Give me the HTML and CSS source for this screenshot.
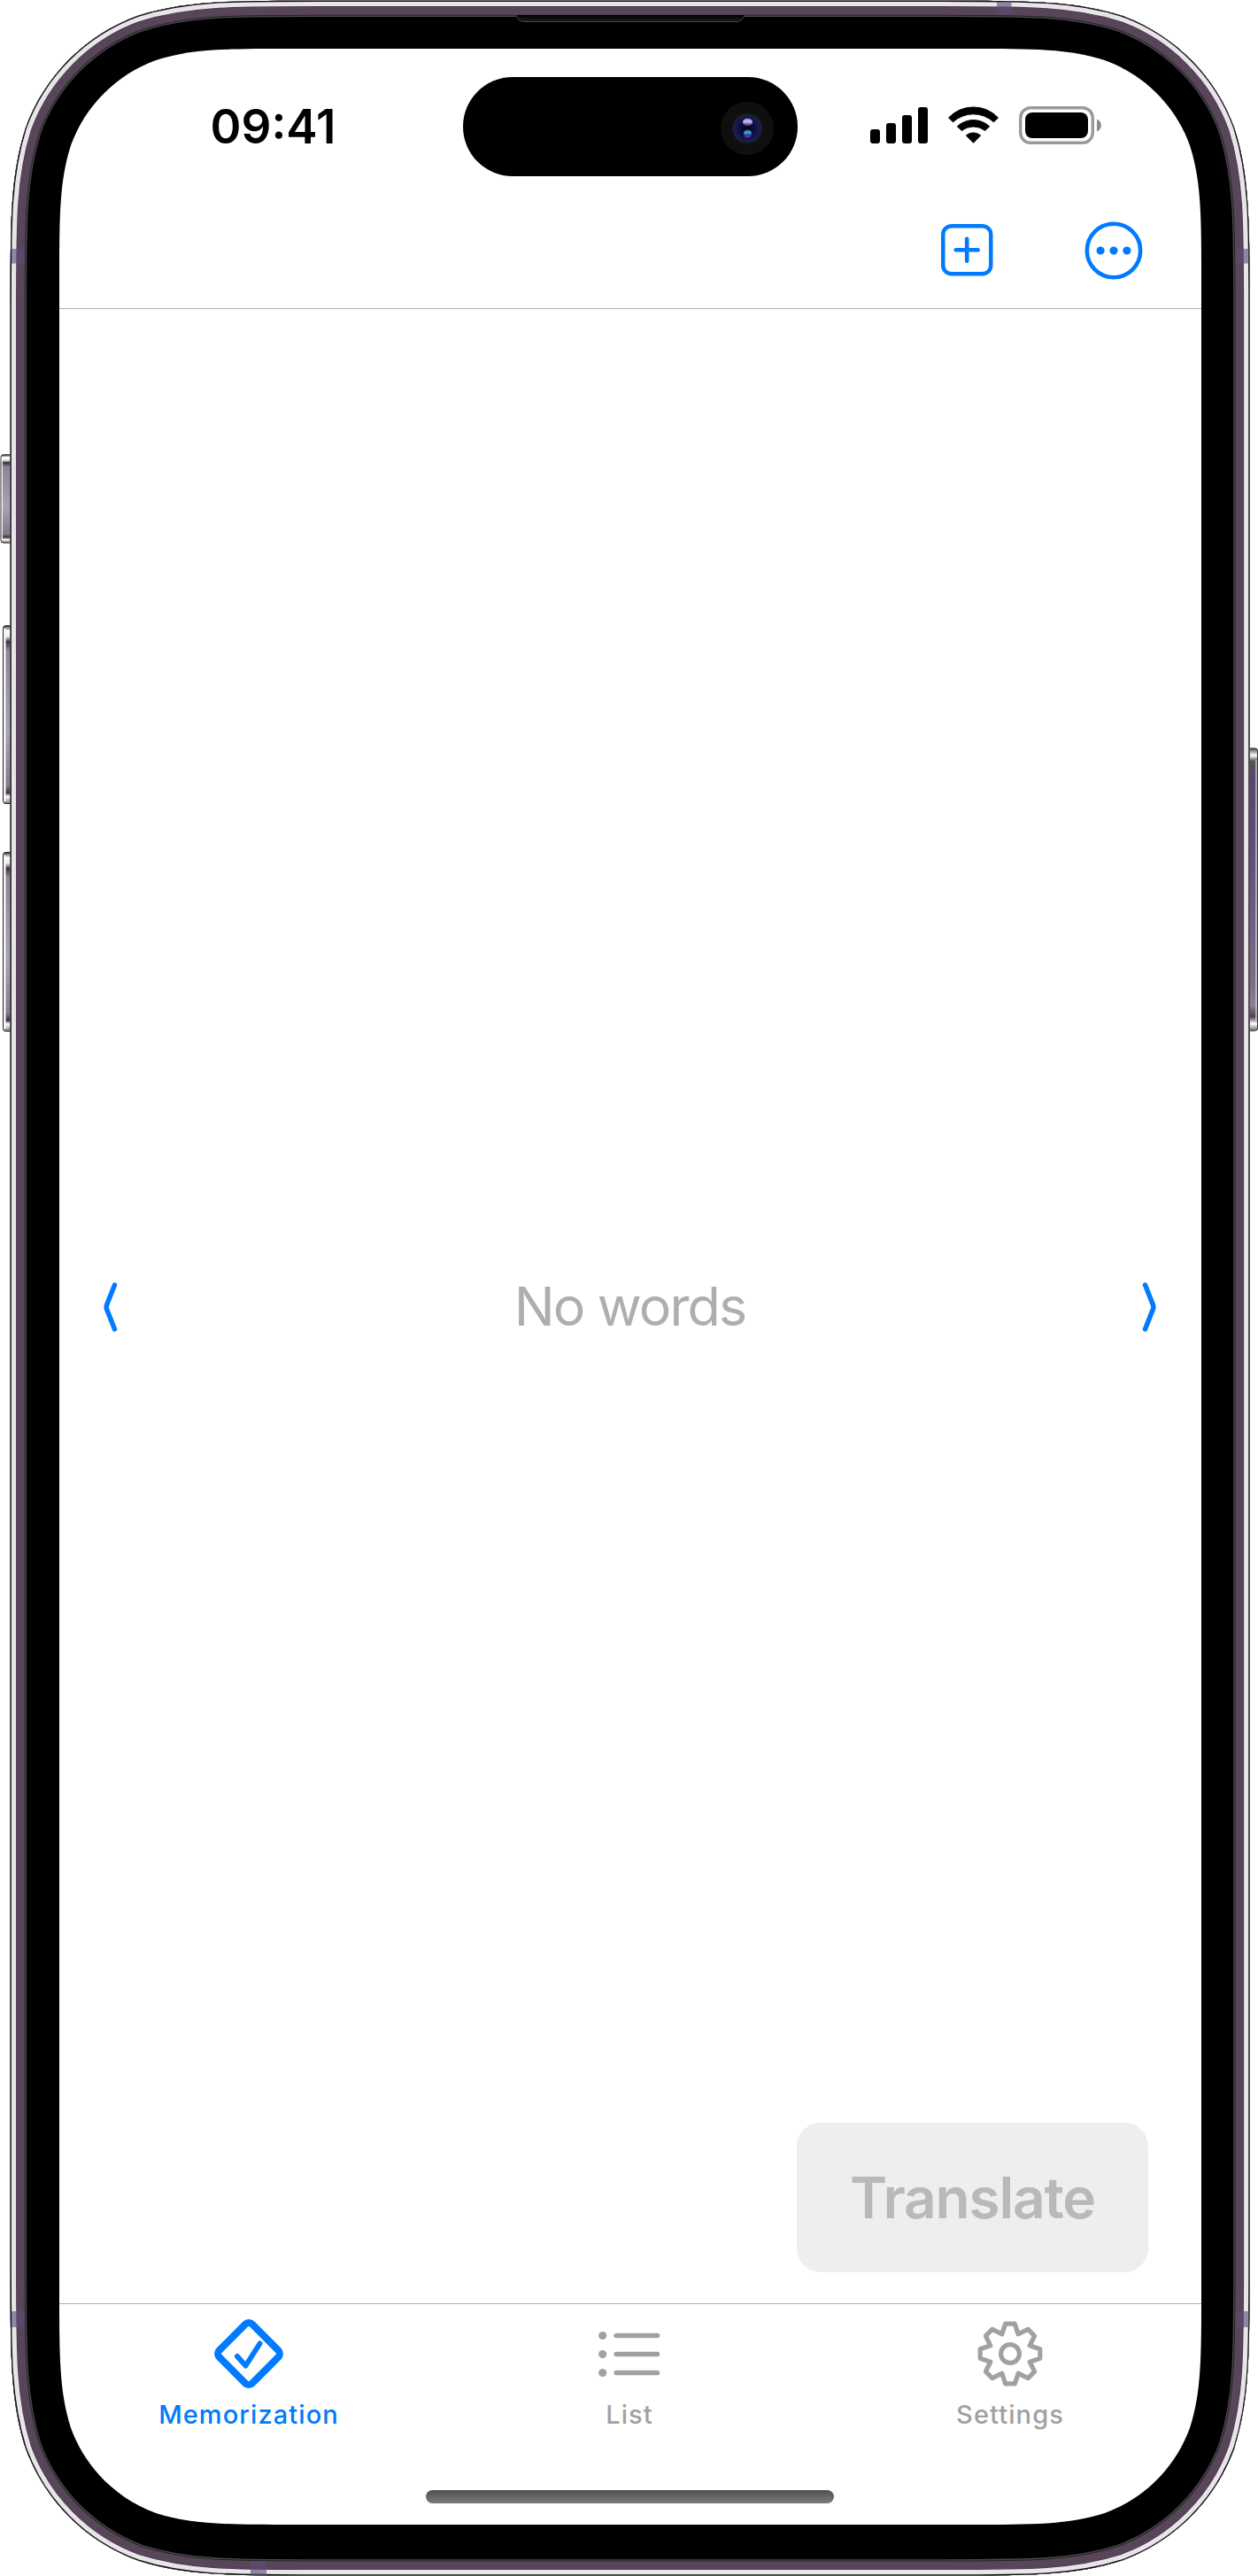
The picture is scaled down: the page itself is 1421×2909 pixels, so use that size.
FILE: index.html
```html
<!DOCTYPE html>
<html lang="en">
<head>
<meta charset="utf-8">
<title>Memorization</title>
<link rel="stylesheet" href="styles.css">
</head>
<body>
<div class="phone">
  <svg class="frame" viewBox="0 0 1421 2909" aria-hidden="true">
    <defs>
      <path id="body" d="M11.7,349.2c0,-100.3 0,-150.5 17.1,-204.5c21.4,-59 67.9,-105.5 126.9,-126.9c54,-17.1 104.2,-17.1 204.5,-17.1H1063c100.3,0 150.5,0 204.5,17.1c59,21.4 105.5,67.9 126.9,126.9c17.1,54 17.1,104.2 17.1,204.5V2560c0,100.3 0,150.5 -17.1,204.5c-21.4,59 -67.9,105.5 -126.9,126.9c-54,17.1 -104.2,17.1 -204.5,17.1H360.2c-100.3,0 -150.5,0 -204.5,-17.1c-59,-21.4 -105.5,-67.9 -126.9,-126.9c-17.1,-54 -17.1,-104.2 -17.1,-204.5z"/>
      <clipPath id="bodyClip"><use href="#body"/></clipPath>
      <linearGradient id="key" x1="0" y1="0" x2="0" y2="1">
        <stop offset="0" stop-color="#333"/><stop offset=".03" stop-color="#fff"/><stop offset=".06" stop-color="#eee"/>
        <stop offset=".09" stop-color="#3a333d"/><stop offset=".14" stop-color="#8d8496"/><stop offset=".6" stop-color="#a8a0b6"/>
        <stop offset=".9" stop-color="#85788a"/><stop offset=".94" stop-color="#3a333d"/><stop offset=".96" stop-color="#fff"/><stop offset="1" stop-color="#777"/>
      </linearGradient>
      <linearGradient id="power" x1="0" y1="0" x2="0" y2="1">
        <stop offset="0" stop-color="#444"/><stop offset=".025" stop-color="#fff"/><stop offset=".045" stop-color="#555"/>
        <stop offset=".1" stop-color="#58456b"/><stop offset=".4" stop-color="#62507a"/><stop offset=".85" stop-color="#7c7088"/>
        <stop offset=".91" stop-color="#927f98"/><stop offset=".95" stop-color="#4a3f4c"/><stop offset=".975" stop-color="#fff"/><stop offset="1" stop-color="#666"/>
      </linearGradient>
      <linearGradient id="speaker" x1="0" y1="0" x2="0" y2="1">
        <stop offset="0" stop-color="#000"/><stop offset="1" stop-color="#1c1e1d"/>
      </linearGradient>
    </defs>
    <rect x="1" y="513.500" width="16" height="99.500" rx="3" fill="url(#key)" stroke="#222"/>
    <path d="M2.300,516.500V610" stroke="#eee" stroke-width="1.500"/>
    <rect x="3.500" y="706.500" width="14" height="201" rx="3" fill="url(#key)" stroke="#222"/>
    <path d="M5.300,710V905" stroke="#f6f6f6" stroke-width="2.500"/>
    <rect x="3.500" y="962.500" width="14" height="202" rx="3" fill="url(#key)" stroke="#222"/>
    <path d="M5.300,966V1162" stroke="#f6f6f6" stroke-width="2.500"/>
    <rect x="1405" y="845" width="15.500" height="319" rx="3" fill="url(#power)" stroke="#333"/>
    <path d="M1419,858V1152" stroke="#ddd" stroke-width="1.300"/>
    <g clip-path="url(#bodyClip)">
      <use href="#body" fill="#000"/>
      <g fill="none">
        <use href="#body" stroke="#4a4a4c" stroke-width="36.600"/>
        <use href="#body" stroke="#222" stroke-width="34"/>
        <use href="#body" stroke="#58455a" stroke-width="32"/>
        <use href="#body" stroke="#452a49" stroke-width="14"/>
        <use href="#body" stroke="#e8e5e9" stroke-width="12.800"/>
        <use href="#body" stroke="#111" stroke-width="2.400"/>
      </g>
      <g fill="#5a4d78" fill-opacity=".62">
        <path d="M13,281h15v16.500h-15zM13,2610h15v18h-15zM1396,281h15v16.500h-15zM1396,2610h15v18h-15zM1126,2h16.500v14h-16.500zM283,2892h18v16h-18z"/>
      </g>
    </g>
    <path d="M582.500,17Q586,24.500 591,24.500H833Q838,24.500 841.500,17z" fill="url(#speaker)"/>
    <path d="M582.500,17Q586,24.500 591,24.500H833Q838,24.500 841.500,17" fill="none" stroke="#444"/>
    <path fill="#fff" d="M67,319.500c0,-76.200 0,-114.300 13,-155.300c16.200,-44.700 51.500,-80 96.200,-96.200c41,-13 79.100,-13 155.300,-13H1092.500c76.200,0 114.300,0 155.300,13c44.700,16.200 80,51.500 96.200,96.200c13,41 13,79.100 13,155.300V2586.500c0,76.200 0,114.300 -13,155.300c-16.200,44.700 -51.500,80 -96.200,96.200c-41,13 -79.100,13 -155.300,13H331.500c-76.200,0 -114.300,0 -155.300,-13c-44.700,-16.200 -80,-51.500 -96.200,-96.200c-13,-41 -13,-79.100 -13,-155.300z"/>
  </svg>

  <div class="screen">
    <header class="status">
      <div class="time">09:41</div>
      <div class="island">
        <svg width="60" height="60" viewBox="-30 -30 60 60">
          <defs>
            <radialGradient id="lens"><stop offset="0" stop-color="#04040f"/><stop offset=".45" stop-color="#0c0a45"/><stop offset=".8" stop-color="#17194c"/><stop offset="1" stop-color="#1c2238"/></radialGradient>
            <linearGradient id="glint" x1="0" y1="0" x2="0" y2="1"><stop offset="0" stop-color="#8c7cd0"/><stop offset=".4" stop-color="#d0c4ee"/><stop offset="1" stop-color="#2c1a66"/></linearGradient>
            <linearGradient id="glow" x1="0" y1="0" x2="0" y2="1"><stop offset="0" stop-color="#1b4f90"/><stop offset=".35" stop-color="#3cb4c4"/><stop offset=".65" stop-color="#3a34b8"/><stop offset="1" stop-color="#8a20a0"/></linearGradient>
          </defs>
          <circle r="30" fill="#0f0f0f"/>
          <circle r="17.500" fill="#161616"/>
          <circle r="16.300" fill="url(#lens)"/>
          <ellipse cx=".5" cy="-7" rx="5.500" ry="4.300" fill="url(#glint)"/>
          <circle cx=".5" cy="6" r="4.500" fill="url(#glow)"/>
        </svg>
      </div>
      <div class="indicators">
        <svg width="65" height="44" viewBox="983 120 65 44"><path d="M986,146h5a3,3 0 0 1 3,3v10a3,3 0 0 1 -3,3h-5a3,3 0 0 1 -3,-3v-10a3,3 0 0 1 3,-3zM1004,139h5a3,3 0 0 1 3,3v17a3,3 0 0 1 -3,3h-5a3,3 0 0 1 -3,-3v-17a3,3 0 0 1 3,-3zM1022,130h5a3,3 0 0 1 3,3v26a3,3 0 0 1 -3,3h-5a3,3 0 0 1 -3,-3v-26a3,3 0 0 1 3,-3zM1040,121h5a3,3 0 0 1 3,3v35a3,3 0 0 1 -3,3h-5a3,3 0 0 1 -3,-3v-35a3,3 0 0 1 3,-3z"/></svg>
        <svg width="57" height="44" viewBox="1071 120 57 44"><path stroke="#000" stroke-width="1" stroke-linejoin="round" d="M1071.500,133A38.500,38.500 0 0 1 1127.500,133L1122.500,137.800A34,34 0 0 0 1076.500,137.800zM1081.300,142.800A26.500,26.500 0 0 1 1117.700,142.800L1112.700,147.500A21.500,21.500 0 0 0 1086.300,147.500zM1091.300,153A12.500,12.500 0 0 1 1107.700,153L1099.500,161.200z"/></svg>
        <svg width="94" height="44" viewBox="1151 120 94 44"><rect x="1152.700" y="121.700" width="81.600" height="39.600" rx="11.500" fill="none" stroke="#9a9a9a" stroke-width="3.400"/><rect x="1158" y="127" width="71" height="29" rx="8"/><path fill="#8a8a8a" d="M1239,134.500C1245.500,137 1245.500,146 1239,148.500z"/></svg>
      </div>
    </header>
    <nav class="toolbar">
      <svg width="59" height="66" viewBox="1063 249.500 59 66" fill="none" stroke="#007aff"><rect x="1065.250" y="254.750" width="54" height="54" rx="9.500" stroke-width="4.500"/><path d="M1079.700,281.700h25M1092.200,269.200v25" stroke-width="4.600" stroke-linecap="round"/></svg>
      <svg width="66" height="66" viewBox="-33 -33 66 66"><circle r="30.200" fill="none" stroke="#007aff" stroke-width="4.600"/><path d="M-14.900,0h0M0,0h0M14.900,0h0" stroke="#007aff" stroke-width="9.200" stroke-linecap="round"/></svg>
    </nav>
    <main class="content">
      <div class="card">
        <svg width="16" height="58" viewBox="0 0 16 58" fill="none" stroke="#007aff" stroke-width="5.500" stroke-linecap="round" stroke-linejoin="round"><path d="M12.500,4L3.600,26.500Q2.700,29 3.600,31.500L12.500,54"/></svg>
        <p class="empty">No words</p>
        <svg width="16" height="58" viewBox="0 0 16 58" fill="none" stroke="#007aff" stroke-width="5.500" stroke-linecap="round" stroke-linejoin="round"><path d="M3.500,4L12.400,26.500Q13.300,29 12.400,31.500L3.500,54"/></svg>
      </div>
      <button class="translate" disabled>Translate</button>
    </main>
    <footer class="tabs">
      <div class="tab active">
        <svg width="80" height="80" viewBox="-40 -40 80 80" fill="none" stroke="#007aff"><rect x="-26.300" y="-26.300" width="52.600" height="52.600" rx="5.500" stroke-width="8" transform="rotate(45)"/><path d="M-13,3L-3.500,13.500L12.500,-11.500" stroke-width="6" stroke-linecap="round" stroke-linejoin="round"/></svg>
        <span>Memorization</span>
      </div>
      <div class="tab">
        <svg width="70" height="80" viewBox="-35 -40 70 80" stroke="#a1a1a1" stroke-linecap="round"><path d="M-14.800,-20.500H31.500M-14.800,.5H31.500M-14.800,21.500H31.500" stroke-width="5.600"/><path d="M-30.300,-20.500h0M-30.300,.5h0M-30.300,21.500h0" stroke-width="9.200"/></svg>
        <span>List</span>
      </div>
      <div class="tab">
        <svg width="80" height="80" viewBox="-40 -40 80 80" fill="none" stroke="#a1a1a1" stroke-width="5.200" stroke-linejoin="round"><path d="M-5.300,-33.800L5.300,-33.800L9,-22.200L20.200,-27.600L27.600,-20.200L22.200,-9.200L33.800,-5.300V5.300L22.200,9.200L27.600,20.200L20.200,27.600L9.200,22.200L5.300,33.800H-5.300L-9.200,22.200L-20.200,27.600L-27.600,20.200L-22.200,9.200L-33.800,5.300V-5.300L-22.200,-9.200L-27.600,-20.200L-20.200,-27.600L-9.200,-22.200z"/><circle r="10.400"/></svg>
        <span>Settings</span>
      </div>
    </footer>
    <div class="home"></div>
  </div>
</div>
</body>
</html>
```

FILE: styles.css
```css
* { box-sizing: border-box; }
body { margin: 0; background: #fff; font-family: Inter, "Liberation Sans", sans-serif; }
svg { display: block; flex: none; }
.phone { position: relative; width: 1421px; height: 2909px; padding: 55px 64px 58px 67px; overflow: hidden; }
.frame { position: absolute; left: 0; top: 0; width: 1421px; height: 2909px; }
.screen { position: relative; height: 2796px; display: flex; flex-direction: column; }
.status { display: grid; grid-template-columns: 1fr 378px 1fr; align-items: center; padding-top: 32px; height: 144px; }
.time { padding-left: 27px; text-align: center; font-size: 53px; line-height: 112px; font-weight: 600; letter-spacing: 0; }
.island { height: 112px; border-radius: 56px; background: #000; display: flex; align-items: center; justify-content: flex-end; padding: 4px 27px 0 0; }
.indicators { display: flex; gap: 23px; padding: 0 0 2px 82px; }
.toolbar { height: 150px; display: flex; justify-content: flex-end; gap: 103px; padding: 51px 66px 0 0; border-bottom: 1px solid #b0b0b0; }
.content { height: 2252px; display: flex; flex-direction: column; align-items: flex-end; }
.card { flex: 1; align-self: stretch; display: flex; align-items: center; justify-content: space-between; padding: 206px 51px 0 50px; }
.empty { margin: 0; padding-bottom: 2px; font-size: 61px; line-height: 74px; color: #aeaeb2; letter-spacing: -1.9px; }
.translate { width: 397px; height: 169px; margin: 0 60px 35px 0; border: 0; border-radius: 27px; background: #eee; color: #b9b9bb; font: 600 64px/78px Inter, sans-serif; letter-spacing: -1.2px; }
.tabs { height: 211px; display: grid; grid-template-columns: repeat(3, 430px); justify-content: center; padding: 16px 2px 0 0; border-top: 1px solid #b0b0b0; }
.tab { display: flex; flex-direction: column; align-items: center; color: #a1a1a1; font-size: 29px; line-height: 36px; font-weight: 450; letter-spacing: 1.1px; }
.tab span { margin-top: 11px; }
.active { color: #007aff; }
.home { width: 461px; height: 15px; margin: 0 0 0 414px; border-radius: 8px; background: linear-gradient(#505050, #7c7c7c); }
```
